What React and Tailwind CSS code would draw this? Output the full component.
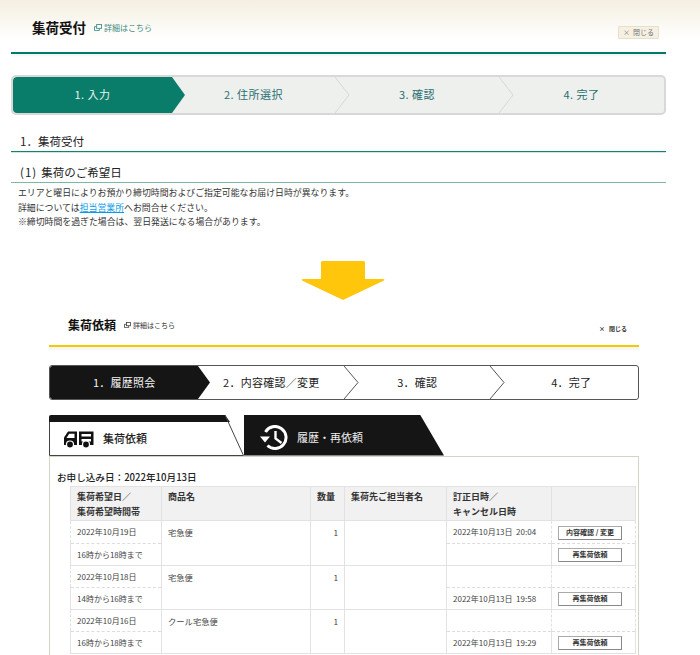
const font = "font-['Noto_Sans_CJK_JP','Liberation_Sans',sans-serif]";

function LinkIcon({ className }) {
  return (
    <svg viewBox="0 0 9 8" className={className} fill="none" stroke="currentColor" strokeWidth="1">
      <rect x="3" y="0.5" width="5.5" height="4.5" />
      <path d="M3 3H0.5V7.5H6V5" />
    </svg>
  );
}

function Chevron({ fill, stroke, w, h }) {
  return (
    <svg width={w + 2} height={h} viewBox={`0 0 ${w + 2} ${h}`} className="absolute top-0 left-full z-10">
      <path d={`M0 0L${w} ${h / 2}L0 ${h}Z`} fill={fill} />
      {stroke && <path d={`M0 0L${w} ${h / 2}L0 ${h}`} fill="none" stroke={stroke} strokeWidth="1" />}
    </svg>
  );
}

function TruckIcon() {
  return (
    <svg width="31" height="18" viewBox="0 0 31 18" className="text-[#111]">
      <path d="M1 15V7.5L5 1.5H14V15Z" fill="currentColor" />
      <path d="M3.5 8L6.2 3.8H11.5V8Z" fill="#fff" />
      <path d="M16 1.5H30.5V15H16ZM18.5 4V6.5H28V4ZM18.5 9V11.5H28V9Z" fill="currentColor" fillRule="evenodd" />
      <circle cx="7" cy="14.5" r="3.5" fill="currentColor" stroke="#fff" strokeWidth="1.2" />
      <circle cx="23" cy="14.5" r="3.5" fill="currentColor" stroke="#fff" strokeWidth="1.2" />
    </svg>
  );
}

function HistoryIcon() {
  return (
    <svg width="28" height="25" viewBox="0 0 28 25" fill="none" stroke="#fff">
      <path d="M5.5 7A11 11 0 1 1 7.5 20.5" strokeWidth="3" />
      <path d="M0 11.5H10L5 17.5Z" fill="#fff" stroke="none" />
      <path d="M15.5 6V13.5L21.5 18" strokeWidth="2.4" />
    </svg>
  );
}

const greenSteps = [
  { label: "1. 入力", w: "w-[159px]" },
  { label: "2. 住所選択", w: "w-[163px]" },
  { label: "3. 確認", w: "w-[164px]" },
  { label: "4. 完了", w: "w-[165px]" },
];

const blackSteps = [
  { label: "1．履歴照会", w: "w-[149px]" },
  { label: "2．内容確認／変更", w: "w-[146px]" },
  { label: "3．確認", w: "w-[147px]" },
  { label: "4．完了", w: "w-[148px] pl-[14px]" },
];

const rows = [
  { date: "2022年10月19日", time: "16時から18時まで", item: "宅急便", edit: "2022年10月13日\u00a0\u00a020:04", editBelow: false, change: true, h: "h-[23px]" },
  { date: "2022年10月18日", time: "14時から16時まで", item: "宅急便", edit: "2022年10月13日\u00a0\u00a019:58", editBelow: true, change: false, h: "h-[22px]" },
  { date: "2022年10月16日", time: "16時から18時まで", item: "クール宅急便", edit: "2022年10月13日\u00a0\u00a019:29", editBelow: true, change: false, h: "h-[22px]" },
];

function ActionButton({ children }) {
  return (
    <button className="ml-[6px] flex h-[14px] w-[64px] items-center justify-center border border-[#aaa] border-b-[#888] border-r-[#888] bg-white text-[7px] font-bold text-[#333]">
      {children}
    </button>
  );
}

export default function App() {
  const cell = "border border-[#e2e2e2] align-top";
  const sub = "h-[22px] align-middle px-[6px] pt-[1px] text-[8px] text-[#444]";
  const dash = "border-b border-dashed border-b-[#dcdcdc]";
  return (
    <div className={`h-[655px] w-[700px] overflow-hidden bg-white text-[#222] ${font}`}>
      <header className="h-[54px] bg-linear-to-b from-[#f4efe1] to-white to-[74%] px-[11px]">
        <div className="flex h-[54px] w-[655px] items-start border-b-2 border-[#007a68]">
          <h1 className="mt-[17px] ml-[21px] text-[13.5px] leading-[20px] font-bold text-[#111]">集荷受付</h1>
          <a className="mt-[22px] ml-[8px] flex items-center gap-[2px] text-[8px] leading-[11px] text-[#3d8c84]">
            <LinkIcon className="h-[7px] w-[8px]" />
            詳細はこちら
          </a>
          <button className="mt-[26px] ml-auto mr-[7px] flex h-[13px] w-[41px] items-center justify-center gap-[3px] rounded-[1px] border border-[#e6dfcc] bg-[#f6f0e3] text-[7px] text-[#777]">
            <span>×</span> 閉じる
          </button>
        </div>
      </header>
      <div className="h-[4px] mx-[11px] w-[655px] bg-linear-to-b from-[#f3f5f3] to-white" />

      <div className="mx-[11px] mt-[17px] flex h-[40px] w-[655px] overflow-hidden rounded-[5px] border-2 border-[#d8d8d8] bg-[#eef0ee]">
        {greenSteps.map((s, i) => (
          <div
            key={s.label}
            className={`relative flex h-full ${s.w} items-center justify-center pb-[1px] text-[11px] tracking-[0.5px] ${
              i === 0 ? "rounded-l-[4px] bg-[#0a7d6a] text-[#e8f3ef]" : "text-[#2a6f70]"
            }`}
          >
            {s.label}
            {i === 0 && <Chevron fill="#0a7d6a" w={13} h={36} />}
            {(i === 1 || i === 2) && <Chevron fill="#eef0ee" stroke="#d6d8d6" w={14} h={36} />}
          </div>
        ))}
      </div>

      <section className="mx-[11px] mt-[17px] w-[655px]">
        <h2 className="h-[20px] border-b border-[#0f8570] pl-[9px] text-[11.5px] leading-[19px] text-[#222] shadow-[0_1px_0_#d5e6e1]">
          1．集荷受付
        </h2>
        <h3 className="mt-[10px] h-[21px] border-b border-[#7fb5aa] pl-[9px] text-[11.5px] leading-[20px] text-[#222]">
          <span className="mr-[4px] tracking-[1px]">(1)</span>集荷のご希望日
        </h3>
        <div className="mt-[3px] pl-[7px] text-[8.9px] leading-[14.5px] text-[#333]">
          <p>エリアと曜日によりお預かり締切時間およびご指定可能なお届け日時が異なります。</p>
          <p>
            詳細については<a className="text-[#0a9be8] underline">担当営業所</a>へお問合せください。
          </p>
          <p>※締切時間を過ぎた場合は、翌日発送になる場合があります。</p>
        </div>
      </section>

      <div className="mt-[31px] flex justify-center pr-[14px]">
        <svg width="84" height="39" viewBox="0 0 84 39" fill="#ffc60c">
          <path d="M20 1.5Q20 0 21.5 0H62.5Q64 0 64 1.5V18H82Q84 18 83 19.5L43 38.5Q42 39 41 38.5L1 19.5Q0 18 2 18H20Z" />
        </svg>
      </div>

      <div className="mx-[49px] mt-[14px] flex h-[33px] w-[590px] items-start border-b-2 border-[#f5c800]">
        <h1 className="mt-[2px] ml-[19px] text-[12px] leading-[17px] font-bold text-[#111]">集荷依頼</h1>
        <a className="mt-[6px] ml-[8px] flex items-center gap-[2px] text-[7px] leading-[10px] text-[#333]">
          <LinkIcon className="h-[6px] w-[7px]" />
          詳細はこちら
        </a>
        <span className="mt-[10px] ml-auto mr-[12px] flex gap-[4px] text-[6px] leading-[9px] font-bold text-[#333]">
          <span>×</span> 閉じる
        </span>
      </div>
      <div className="mx-[49px] h-[3px] w-[590px] bg-[#f6f6f6]" />

      <div className="mx-[49px] mt-[15px] flex h-[35px] w-[590px] overflow-hidden rounded-[3px] border border-[#555] bg-white">
        {blackSteps.map((s, i) => (
          <div
            key={s.label}
            className={`relative flex h-full ${s.w} items-center justify-center text-[11px] tracking-[0.25px] ${
              i === 0 ? "rounded-l-[2px] bg-[#151515] text-[#f2f2f2]" : "text-[#222]"
            }`}
          >
            {s.label}
            {i === 0 && <Chevron fill="#151515" w={12} h={33} />}
            {(i === 1 || i === 2) && <Chevron fill="#fff" stroke="#555" w={14} h={33} />}
          </div>
        ))}
      </div>

      <div className="mx-[49px] mt-[15px] flex h-[41px] w-[590px]">
        <div className="relative flex h-[41px] w-[195px] items-center">
          <svg width="195" height="41" viewBox="0 0 195 41" className="absolute inset-0">
            <path d="M0 2Q0 0 2 0H176L181 7H0Z" fill="#151515" />
            <path d="M0.5 7V40.5H194.5M176 0L194.5 40.5" fill="none" stroke="#444" strokeWidth="1" />
          </svg>
          <div className="relative mt-[7px] ml-[14px]">
            <TruckIcon />
          </div>
          <span className="relative mt-[7px] ml-[9px] text-[11px] font-medium text-[#222]">集荷依頼</span>
        </div>
        <div className="flex h-[41px] w-[200px] items-center bg-[#151515] pt-[5px] [clip-path:polygon(0_0,176px_0,200px_100%,0_100%)]">
          <div className="ml-[16px]">
            <HistoryIcon />
          </div>
          <span className="ml-[9px] text-[11px] text-[#eee]">履歴・再依頼</span>
        </div>
      </div>

      <div className="mx-[49px] h-[300px] w-[590px] border-x border-t border-[#d5d3c6] pt-[13px]">
        <p className="pl-[7px] text-[9.6px] leading-[14px] font-medium text-[#222]">お申し込み日：2022年10月13日</p>
        <table className="mt-[2px] ml-[20px] w-[565px] table-fixed border-collapse">
          <colgroup>
            <col className="w-[91px]" />
            <col className="w-[149px]" />
            <col className="w-[34px]" />
            <col className="w-[102px]" />
            <col className="w-[105px]" />
            <col className="w-[84px]" />
          </colgroup>
          <thead>
            <tr className="h-[34px] bg-[#f1f1f1] text-left text-[9px] leading-[15px] font-bold text-[#333]">
              <th className={`${cell} px-[6px] pt-[2px] font-bold`}>集荷希望日／<br />集荷希望時間帯</th>
              <th className={`${cell} px-[6px] pt-[2px] font-bold`}>商品名</th>
              <th className={`${cell} px-[6px] pt-[2px] font-bold`}>数量</th>
              <th className={`${cell} px-[6px] pt-[2px] font-bold`}>集荷先ご担当者名</th>
              <th className={`${cell} px-[6px] pt-[2px] font-bold`}>訂正日時／<br />キャンセル日時</th>
              <th className={cell} />
            </tr>
          </thead>
          <tbody>
            {rows.map((r) => [
              <tr key={r.date + "a"} className={r.h}>
                <td className={`${sub} border-x border-x-[#e2e2e2] ${dash}`}>{r.date}</td>
                <td rowSpan={2} className={`${cell} px-[6px] pt-[5px] text-[8.3px] text-[#444]`}>{r.item}</td>
                <td rowSpan={2} className={`${cell} px-[6px] pt-[5px] text-right text-[8.3px] text-[#444]`}>1</td>
                <td rowSpan={2} className={cell} />
                <td className={`${sub} border-x border-x-[#e2e2e2] ${dash}`}>{r.editBelow ? "" : r.edit}</td>
                <td className={`border-x border-x-[#e2e2e2] pt-[2px] align-middle ${dash}`}>
                  {r.change && <ActionButton>内容確認 / 変更</ActionButton>}
                </td>
              </tr>,
              <tr key={r.date + "b"}>
                <td className={`${sub} border-x border-b border-x-[#e2e2e2] border-b-[#e2e2e2]`}>{r.time}</td>
                <td className={`${sub} border-x border-b border-x-[#e2e2e2] border-b-[#e2e2e2]`}>{r.editBelow ? r.edit : ""}</td>
                <td className="h-[22px] border-x border-b border-x-[#e2e2e2] border-b-[#e2e2e2] pt-[1px] align-middle">
                  <ActionButton>再集荷依頼</ActionButton>
                </td>
              </tr>,
            ])}
          </tbody>
        </table>
      </div>
    </div>
  );
}
